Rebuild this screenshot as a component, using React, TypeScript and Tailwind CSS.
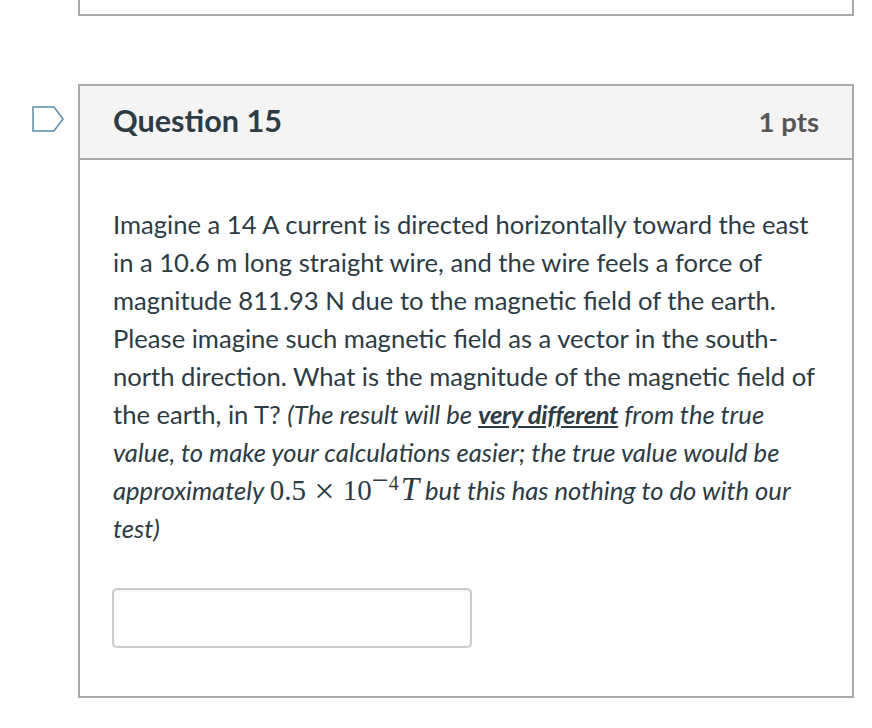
export default function App() {
  return (
    <div className="h-[728px] w-[872px] overflow-hidden bg-white font-['Lato',sans-serif] text-[#2d3b45]">
      {/* previous question, only its bottom edge is visible */}
      <div className="ml-[78px] h-4 w-[776px] border-x-2 border-b-2 border-[#aaaaaa]" />

      <div className="mt-[68px] flex">
        <div className="w-[78px] shrink-0 pl-[32px] pt-[22px]">
          <svg width="32" height="26" viewBox="0 0 32 26" fill="none">
            <path d="M1 1H22L31 13L22 25H1Z" fill="white" stroke="#5b8aa6" strokeWidth="1.5" />
          </svg>
        </div>

        <div className="h-[614px] w-[776px] border-2 border-[#aaaaaa]">
          <div className="flex h-[74px] items-center justify-between border-b-2 border-[#aaaaaa] bg-[#f4f4f4] px-[33px]">
            <h2 className="-mt-[3px] text-[30.6px] font-bold">Question 15</h2>
            <span className="text-[27.5px] font-bold text-[#565656]">1 pts</span>
          </div>

          <div className="px-[33px] pt-[45px]">
            <p className="text-[25.6px] leading-[38px]">
              Imagine a 14 A current is directed horizontally toward the east in a 10.6 m long straight wire, and the wire feels a force of magnitude 811.93 N due to the magnetic field of the earth. Please imagine such magnetic field as a vector in the south-north direction. What is the magnitude of the magnetic field of the earth, in T?{' '}
              <em>
                (The result will be <strong className="tracking-[-0.33px] underline">very different</strong> from the true value, to make your calculations easier; the true value would be approximately{' '}
                <span className="font-['Liberation_Serif',serif] text-[29px] leading-[0] not-italic">
                  0.5 <span className="mx-[1px] align-[-3px] text-[36px] leading-[0]">×</span> 10
                  <sup className="text-[20px] leading-[0]">
                    <span className="text-[30px] leading-[0]">−</span>4
                  </sup>
                  <i className="ml-[2px] text-[33px] leading-[0]">T</i>
                </span>{' '}
                but this has nothing to do with our test)
              </em>
            </p>

            <input
              type="text"
              className="mt-[41px] -ml-px block h-[60px] w-[360px] rounded-[5px] border-2 border-[#cccccc] bg-white shadow-[inset_0_1px_2px_rgba(0,0,0,0.08)]"
            />
          </div>
        </div>
      </div>
    </div>
  )
}
